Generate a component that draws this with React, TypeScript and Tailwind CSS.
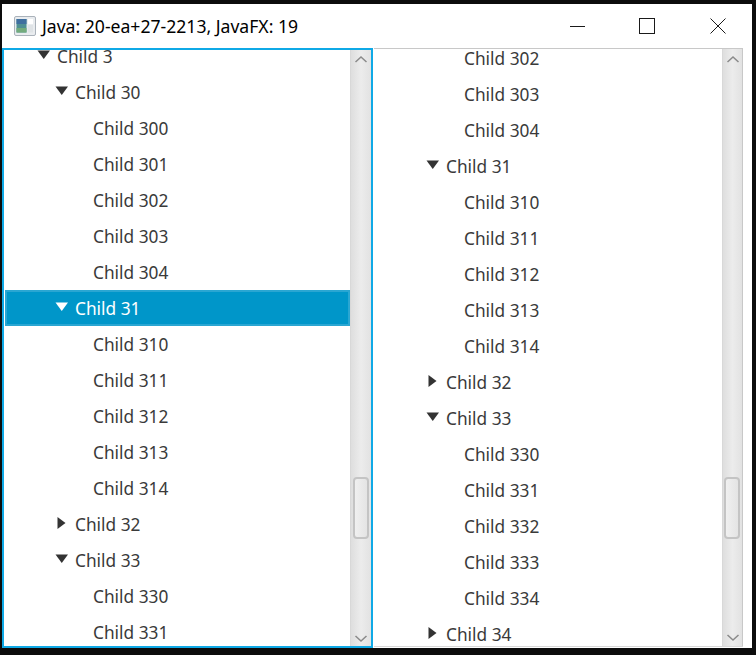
type Row = { t: string; d: number; a?: 'o' | 'c'; s?: boolean };

const L = (t: string, d: number): Row => ({ t, d });

const leftRows: Row[] = [
  { t: 'Child 3', d: 0, a: 'o' },
  { t: 'Child 30', d: 1, a: 'o' },
  L('Child 300', 2),
  L('Child 301', 2),
  L('Child 302', 2),
  L('Child 303', 2),
  L('Child 304', 2),
  { t: 'Child 31', d: 1, a: 'o', s: true },
  L('Child 310', 2),
  L('Child 311', 2),
  L('Child 312', 2),
  L('Child 313', 2),
  L('Child 314', 2),
  { t: 'Child 32', d: 1, a: 'c' },
  { t: 'Child 33', d: 1, a: 'o' },
  L('Child 330', 2),
  L('Child 331', 2),
];

const rightRows: Row[] = [
  L('Child 302', 2),
  L('Child 303', 2),
  L('Child 304', 2),
  { t: 'Child 31', d: 1, a: 'o' },
  L('Child 310', 2),
  L('Child 311', 2),
  L('Child 312', 2),
  L('Child 313', 2),
  L('Child 314', 2),
  { t: 'Child 32', d: 1, a: 'c' },
  { t: 'Child 33', d: 1, a: 'o' },
  L('Child 330', 2),
  L('Child 331', 2),
  L('Child 332', 2),
  L('Child 333', 2),
  L('Child 334', 2),
  { t: 'Child 34', d: 1, a: 'c' },
];

function Arrow({ a, s }: { a: 'o' | 'c'; s?: boolean }) {
  const fill = s ? '#ffffff' : '#333333';
  return (
    <svg width="14" height="14" viewBox="0 0 14 14" className="block" aria-hidden="true">
      {a === 'o' ? <path d="M0.5 2.5 H13 L6.75 11 Z" fill={fill} /> : <path d="M2.5 1 L10.5 7 L2.5 13 Z" fill={fill} />}
    </svg>
  );
}

function TreeRow({ row, right }: { row: Row; right?: boolean }) {
  const pad = right
    ? row.d === 1
      ? 'pl-[52px]'
      : 'pl-[70px]'
    : row.d === 0
      ? 'ml-[1px] pl-[32px]'
      : row.d === 1
        ? 'ml-[1px] pl-[50px]'
        : 'ml-[1px] pl-[68px]';
  return (
    <div
      className={`relative flex h-9 items-center whitespace-nowrap text-[17.3px] ${pad} ${
        row.s ? 'bg-[#0096c9] text-white outline-2 -outline-offset-2 outline-[#2aa6d2]' : 'text-[#3a3a3a]'
      }`}
    >
      <span className="flex w-[20px] shrink-0 items-center -translate-y-[1px]">
        {row.a ? <Arrow a={row.a} s={row.s} /> : null}
      </span>
      <span className="translate-y-[1px]">{row.t}</span>
    </div>
  );
}

function Scrollbar({ right }: { right?: boolean }) {
  return (
    <div
      className={`flex w-[21px] shrink-0 flex-col items-center border-l border-[#d8d8d8] bg-gradient-to-r from-[#dedede] via-[#ececec] to-[#e2e2e2] ${
        right ? 'border-r border-r-[#c8c8c8]' : ''
      }`}
    >
      <svg width="14" height="8" viewBox="0 0 14 8" className={`shrink-0 ${right ? 'mt-[6px]' : 'mt-[5px]'}`} aria-hidden="true">
        <path d="M1.5 7 L7 2 L12.5 7" fill="none" stroke="#8a8a8a" strokeWidth="1.5" />
      </svg>
      <div className="-ml-[1px] mt-[414px] h-[62px] w-[16px] shrink-0 rounded-[4px] border-2 border-[#c4c4c4] bg-gradient-to-r from-[#f0f0f0] to-[#e4e4e4]" />
      <div className="flex-1" />
      <svg width="14" height="8" viewBox="0 0 14 8" className={`shrink-0 ${right ? 'mb-[4px]' : 'mb-[3px]'}`} aria-hidden="true">
        <path d="M1.5 1 L7 6 L12.5 1" fill="none" stroke="#8a8a8a" strokeWidth="1.5" />
      </svg>
    </div>
  );
}

export default function App() {
  return (
    <div
      className="h-[655px] w-[756px] overflow-hidden bg-[#0c0c0c] pl-[2px] pr-[4px] pt-[4px] pb-[7px]"
      style={{ fontFamily: '"Noto Sans", "Open Sans", sans-serif' }}
    >
      <div className="flex h-full flex-col bg-white">
        <div className="flex h-[44px] shrink-0 items-center">
          <svg width="22" height="20" viewBox="0 0 22 20" className="ml-[12px] mr-[6px] shrink-0" aria-hidden="true">
            <rect x="0.5" y="0.5" width="21" height="19" rx="1.5" fill="#e9ecef" stroke="#aab2ba" />
            <rect x="2.5" y="3" width="10" height="13.5" fill="#4f8f93" />
            <rect x="2.5" y="3" width="10" height="5" fill="#3f6f9f" />
            <rect x="2.5" y="12" width="10" height="4.5" fill="#73ab7c" />
            <rect x="14" y="3" width="5" height="5" fill="#ffffff" />
            <rect x="14" y="9" width="5" height="7.5" fill="#dfe3e6" />
          </svg>
          <span className="translate-y-[1px] whitespace-nowrap text-[17.6px] leading-none text-black">Java: 20-ea+27-2213, JavaFX: 19</span>
          <div className="flex-1" />
          <svg width="15" height="15" viewBox="0 0 15 15" className="mr-[54px] shrink-0" aria-hidden="true">
            <path d="M0 7.5 H15" stroke="#1a1a1a" strokeWidth="1" />
          </svg>
          <svg width="16" height="16" viewBox="0 0 16 16" className="mr-[55px] shrink-0" aria-hidden="true">
            <rect x="0.5" y="0.5" width="15" height="15" fill="none" stroke="#1a1a1a" strokeWidth="1" />
          </svg>
          <svg width="16" height="16" viewBox="0 0 16 16" className="mr-[26px] shrink-0" aria-hidden="true">
            <path d="M0.5 0.5 L15.5 15.5 M15.5 0.5 L0.5 15.5" stroke="#1a1a1a" strokeWidth="1" />
          </svg>
        </div>
        <div className="flex min-h-0 flex-1">
          <div className="flex w-[371px] shrink-0 overflow-hidden border-2 border-[#0fa9e6]">
            <div className="min-w-0 flex-1 overflow-hidden bg-white">
              <div className="-mt-[12px]">
                {leftRows.map((r) => (
                  <TreeRow key={r.t} row={r} />
                ))}
              </div>
            </div>
            <Scrollbar />
          </div>
          <div className="mb-[1px] ml-[1px] flex w-[369px] shrink-0 overflow-hidden border-t border-t-[#c8c8c8] border-b border-b-[#d8d8d8]">
            <div className="min-w-0 flex-1 overflow-hidden bg-white">
              <div className="-mt-[9px]">
                {rightRows.map((r) => (
                  <TreeRow key={r.t + 'r'} row={r} right />
                ))}
              </div>
            </div>
            <Scrollbar right />
          </div>
        </div>
      </div>
    </div>
  );
}
